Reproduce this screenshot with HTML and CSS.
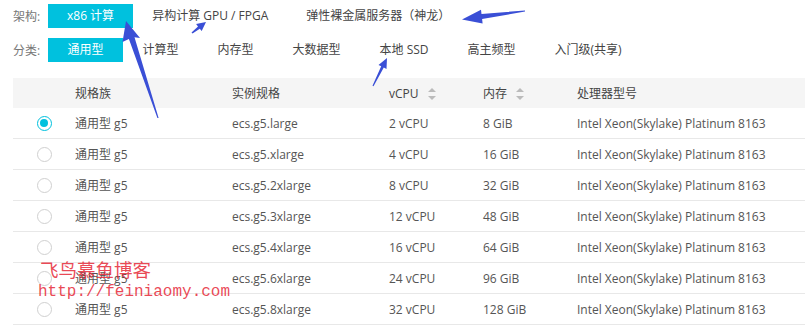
FILE: index.html
```html
<!DOCTYPE html>
<html lang="zh-CN">

<head>
  <meta charset="UTF-8">
  <meta name="viewport" content="width=device-width, initial-scale=1.0">
  <title>ECS 实例规格</title>
  <link rel="stylesheet" href="styles.css">
</head>

<body>

  <div class="page">

    <div class="filters">
      <div class="filter-row">
        <span class="filter-label">架构:</span>
        <span class="filter-item active">x86 计算</span>
        <span class="filter-item">异构计算 GPU / FPGA</span>
        <span class="filter-item">弹性裸金属服务器（神龙）</span>
      </div>
      <div class="filter-row">
        <span class="filter-label">分类:</span>
        <span class="filter-item active">通用型</span>
        <span class="filter-item">计算型</span>
        <span class="filter-item">内存型</span>
        <span class="filter-item">大数据型</span>
        <span class="filter-item">本地 SSD</span>
        <span class="filter-item">高主频型</span>
        <span class="filter-item">入门级(共享)</span>
      </div>
    </div>

    <div class="spec-table">
      <div class="spec-row head">
        <span></span>
        <span>规格族</span>
        <span>实例规格</span>
        <span>vCPU <i class="sort"></i></span>
        <span>内存 <i class="sort"></i></span>
        <span>处理器型号</span>
      </div>
      <div class="spec-row">
        <span><i class="radio checked"></i></span>
        <span>通用型 g5</span>
        <span>ecs.g5.large</span>
        <span>2 vCPU</span>
        <span>8 GiB</span>
        <span>Intel Xeon(Skylake) Platinum 8163</span>
      </div>
      <div class="spec-row">
        <span><i class="radio"></i></span>
        <span>通用型 g5</span>
        <span>ecs.g5.xlarge</span>
        <span>4 vCPU</span>
        <span>16 GiB</span>
        <span>Intel Xeon(Skylake) Platinum 8163</span>
      </div>
      <div class="spec-row">
        <span><i class="radio"></i></span>
        <span>通用型 g5</span>
        <span>ecs.g5.2xlarge</span>
        <span>8 vCPU</span>
        <span>32 GiB</span>
        <span>Intel Xeon(Skylake) Platinum 8163</span>
      </div>
      <div class="spec-row">
        <span><i class="radio"></i></span>
        <span>通用型 g5</span>
        <span>ecs.g5.3xlarge</span>
        <span>12 vCPU</span>
        <span>48 GiB</span>
        <span>Intel Xeon(Skylake) Platinum 8163</span>
      </div>
      <div class="spec-row">
        <span><i class="radio"></i></span>
        <span>通用型 g5</span>
        <span>ecs.g5.4xlarge</span>
        <span>16 vCPU</span>
        <span>64 GiB</span>
        <span>Intel Xeon(Skylake) Platinum 8163</span>
      </div>
      <div class="spec-row">
        <span><i class="radio"></i></span>
        <span>通用型 g5</span>
        <span>ecs.g5.6xlarge</span>
        <span>24 vCPU</span>
        <span>96 GiB</span>
        <span>Intel Xeon(Skylake) Platinum 8163</span>
      </div>
      <div class="spec-row">
        <span><i class="radio"></i></span>
        <span>通用型 g5</span>
        <span>ecs.g5.8xlarge</span>
        <span>32 vCPU</span>
        <span>128 GiB</span>
        <span>Intel Xeon(Skylake) Platinum 8163</span>
      </div>
    </div>

    <!-- watermark -->
    <div class="watermark">
      <div class="wm-title">飞鸟慕鱼博客</div>
      <div class="wm-url">http://feiniaomy.com</div>
    </div>

    <!-- hand drawn arrows over the screenshot -->
    <svg class="arrows" width="805" height="331" viewBox="0 0 805 331">
      <polygon points="126,21 140,38 134.5,37.3 158.6,118 157.4,118 128.9,39 122.5,42" />
      <polygon points="206,22 201.7,31.1 199.8,28.8 192.5,33.6 191.5,32.4 198,26.4 196.1,24.1" />
      <polygon points="462,19.5 482.6,23.5 482.1,19 525,11.6 525,10.4 481.5,14 481,9.8" />
      <polygon points="387,58 386.5,69 383.8,67.6 373.5,86.3 372.5,85.7 381.2,66.2 378.5,64.9" />
    </svg>

  </div>

</body>

</html>
```

FILE: styles.css
```css
body {
  margin: 0;
  font-family: "Open Sans", "Noto Sans CJK SC", sans-serif;
  font-size: 12px;
  color: #555;
  background: #fff;
}

.page {
  position: relative;
  width: 805px;
  height: 331px;
  overflow: hidden;
}

/* Filters */
.filters {
  padding-top: 4px;
  display: flex;
  flex-direction: column;
  gap: 10px;
}

.filter-row {
  display: flex;
  align-items: center;
  height: 24px;
}

.filter-label {
  width: 48px;
  padding-left: 13px;
  box-sizing: border-box;
  color: #777;
}

.filter-item {
  padding: 0 19.5px;
  line-height: 24px;
  color: #444;
  white-space: nowrap;
}

.filter-row:first-child .filter-item {
  padding: 0 19px;
}

.filter-item.active {
  background-color: #00c1de;
  color: #fff;
}

/* Table */
.spec-table {
  margin-top: 16px;
  margin-left: 13px;
}

.spec-row {
  display: grid;
  grid-template-columns: 62px 157px 157px 94px 94px 1fr;
  align-items: center;
  height: 31px;
  border-bottom: 1px solid #e8e8e8;
  box-sizing: border-box;
  white-space: nowrap;
}

.spec-row.head {
  height: 30px;
  background-color: #f5f5f5;
  border-bottom: none;
  color: #444;
}

.spec-row > span:first-child {
  display: flex;
  justify-content: center;
}

.radio {
  display: block;
  width: 13px;
  height: 13px;
  border: 1px solid #d0d0d0;
  border-radius: 50%;
  box-sizing: content-box;
}

.radio.checked {
  border-color: #00c1de;
  position: relative;
}

.radio.checked:after {
  content: '';
  position: absolute;
  left: 2.5px;
  top: 2.5px;
  width: 8px;
  height: 8px;
  border-radius: 50%;
  background-color: #00c1de;
}

.sort {
  display: inline-block;
  position: relative;
  width: 8px;
  height: 12px;
  margin-left: 6px;
  vertical-align: -2px;
}

.sort:before,
.sort:after {
  content: '';
  position: absolute;
  left: 0;
  border-left: 4px solid transparent;
  border-right: 4px solid transparent;
}

.sort:before {
  top: 0;
  border-bottom: 4px solid #bbb;
}

.sort:after {
  bottom: 0;
  border-top: 4px solid #bbb;
}

/* Watermark */
.watermark {
  position: absolute;
  left: 38px;
  top: 256px;
  color: rgba(230, 40, 55, 0.85);
}

.wm-title {
  font-family: "Noto Sans CJK SC", sans-serif;
  font-size: 18.5px;
  line-height: 26px;
  padding-left: 2px;
}

.wm-url {
  font-family: "Liberation Mono", monospace;
  font-size: 16px;
  line-height: 20px;
}

.arrows {
  position: absolute;
  left: 0;
  top: 0;
  fill: #3a4fd6;
}
```
